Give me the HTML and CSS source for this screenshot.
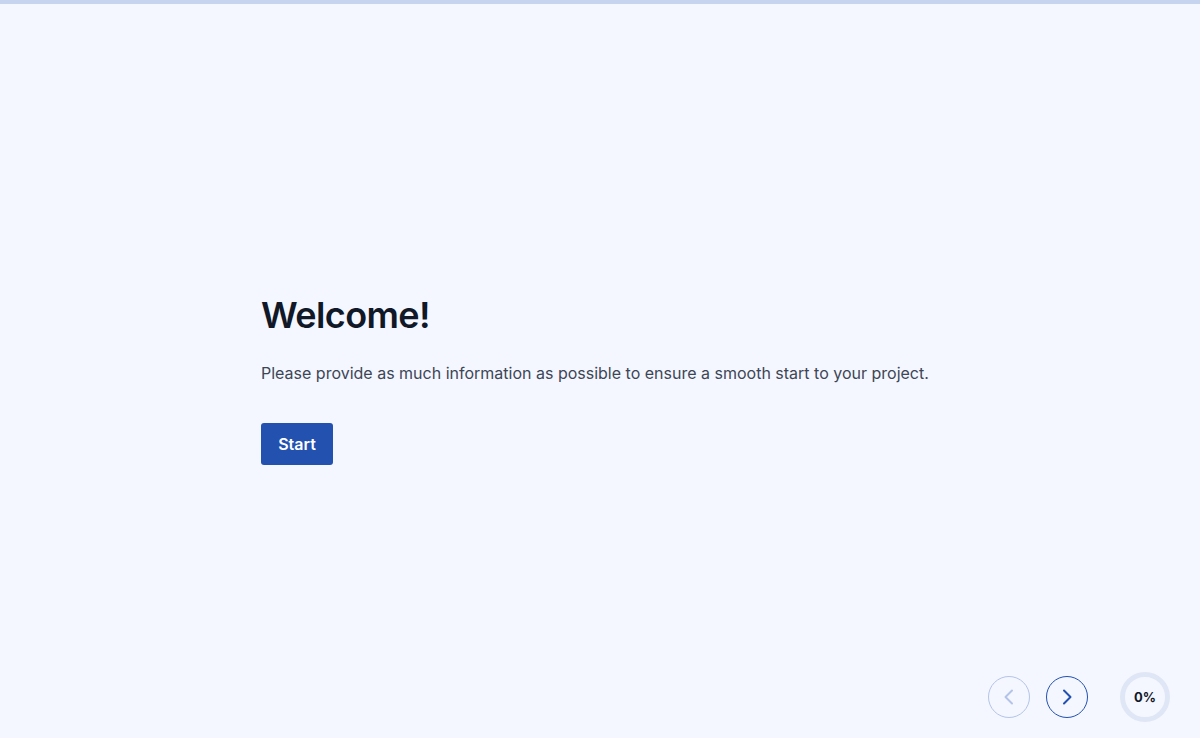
FILE: index.html
```html
<!DOCTYPE html>
<html lang="en">
<head>
<meta charset="utf-8">
<title>Welcome</title>
<link rel="stylesheet" href="styles.css">
</head>
<body>
<div class="progress-bar"></div>
<main class="stage">
  <section class="intro">
    <h1 class="title">Welcome!</h1>
    <p class="lead">Please provide as much information as possible to ensure a smooth start to your project.</p>
    <button class="start-btn" type="button">Start</button>
  </section>
</main>
<footer class="nav">
  <button class="nav-btn nav-btn--disabled" type="button" aria-label="Previous">
    <svg width="18" height="18" viewBox="0 0 18 18" fill="none"><path d="M12 2.5 5.5 9l6.5 6.5" stroke="currentColor" stroke-width="2" stroke-linecap="round" stroke-linejoin="round"/></svg>
  </button>
  <button class="nav-btn" type="button" aria-label="Next">
    <svg width="18" height="18" viewBox="0 0 18 18" fill="none"><path d="M6 2.5 12.5 9 6 15.5" stroke="currentColor" stroke-width="2" stroke-linecap="round" stroke-linejoin="round"/></svg>
  </button>
  <div class="percent">0%</div>
</footer>
</body>
</html>
```
FILE: styles.css
```css
* { box-sizing: border-box; }
html, body { margin: 0; height: 100%; }
body {
  background: #f4f7ff;
  font-family: Inter, "Noto Sans", sans-serif;
  color: #111827;
  display: flex;
  flex-direction: column;
  overflow: hidden;
}
.progress-bar {
  height: 4px;
  background: #c7d4ef;
  flex: none;
}
.stage {
  flex: 1;
  display: flex;
  align-items: center;
  justify-content: center;
}
.intro {
  width: 678px;
  margin-top: 16px;
}
.title {
  margin: 0;
  font-size: 36px;
  line-height: 44px;
  font-weight: 600;
  letter-spacing: -0.6px;
  color: #111827;
}
.lead {
  margin: 24px 0 0;
  font-size: 16px;
  line-height: 24px;
  color: #3d4656;
}
.start-btn {
  margin-top: 38px;
  height: 42px;
  width: 72px;
  border: none;
  border-radius: 3px;
  background: #2251b0;
  color: #fff;
  font-family: inherit;
  font-size: 16px;
  font-weight: 600;
  cursor: pointer;
}
.nav {
  position: absolute;
  right: 30px;
  bottom: 16px;
  display: flex;
  align-items: center;
  gap: 16px;
}
.nav-btn {
  width: 42px;
  height: 42px;
  border-radius: 50%;
  border: 1px solid #2251b0;
  background: transparent;
  color: #2251b0;
  display: flex;
  align-items: center;
  justify-content: center;
  padding: 0;
  cursor: pointer;
}
.nav-btn--disabled {
  border-color: #b4c4e8;
  color: #b4c4e8;
}
.percent {
  margin-left: 16px;
  width: 50px;
  height: 50px;
  border-radius: 50%;
  border: 5px solid #dfe6f5;
  display: flex;
  align-items: center;
  justify-content: center;
  font-size: 13px;
  font-weight: 700;
  color: #111827;
}
```
